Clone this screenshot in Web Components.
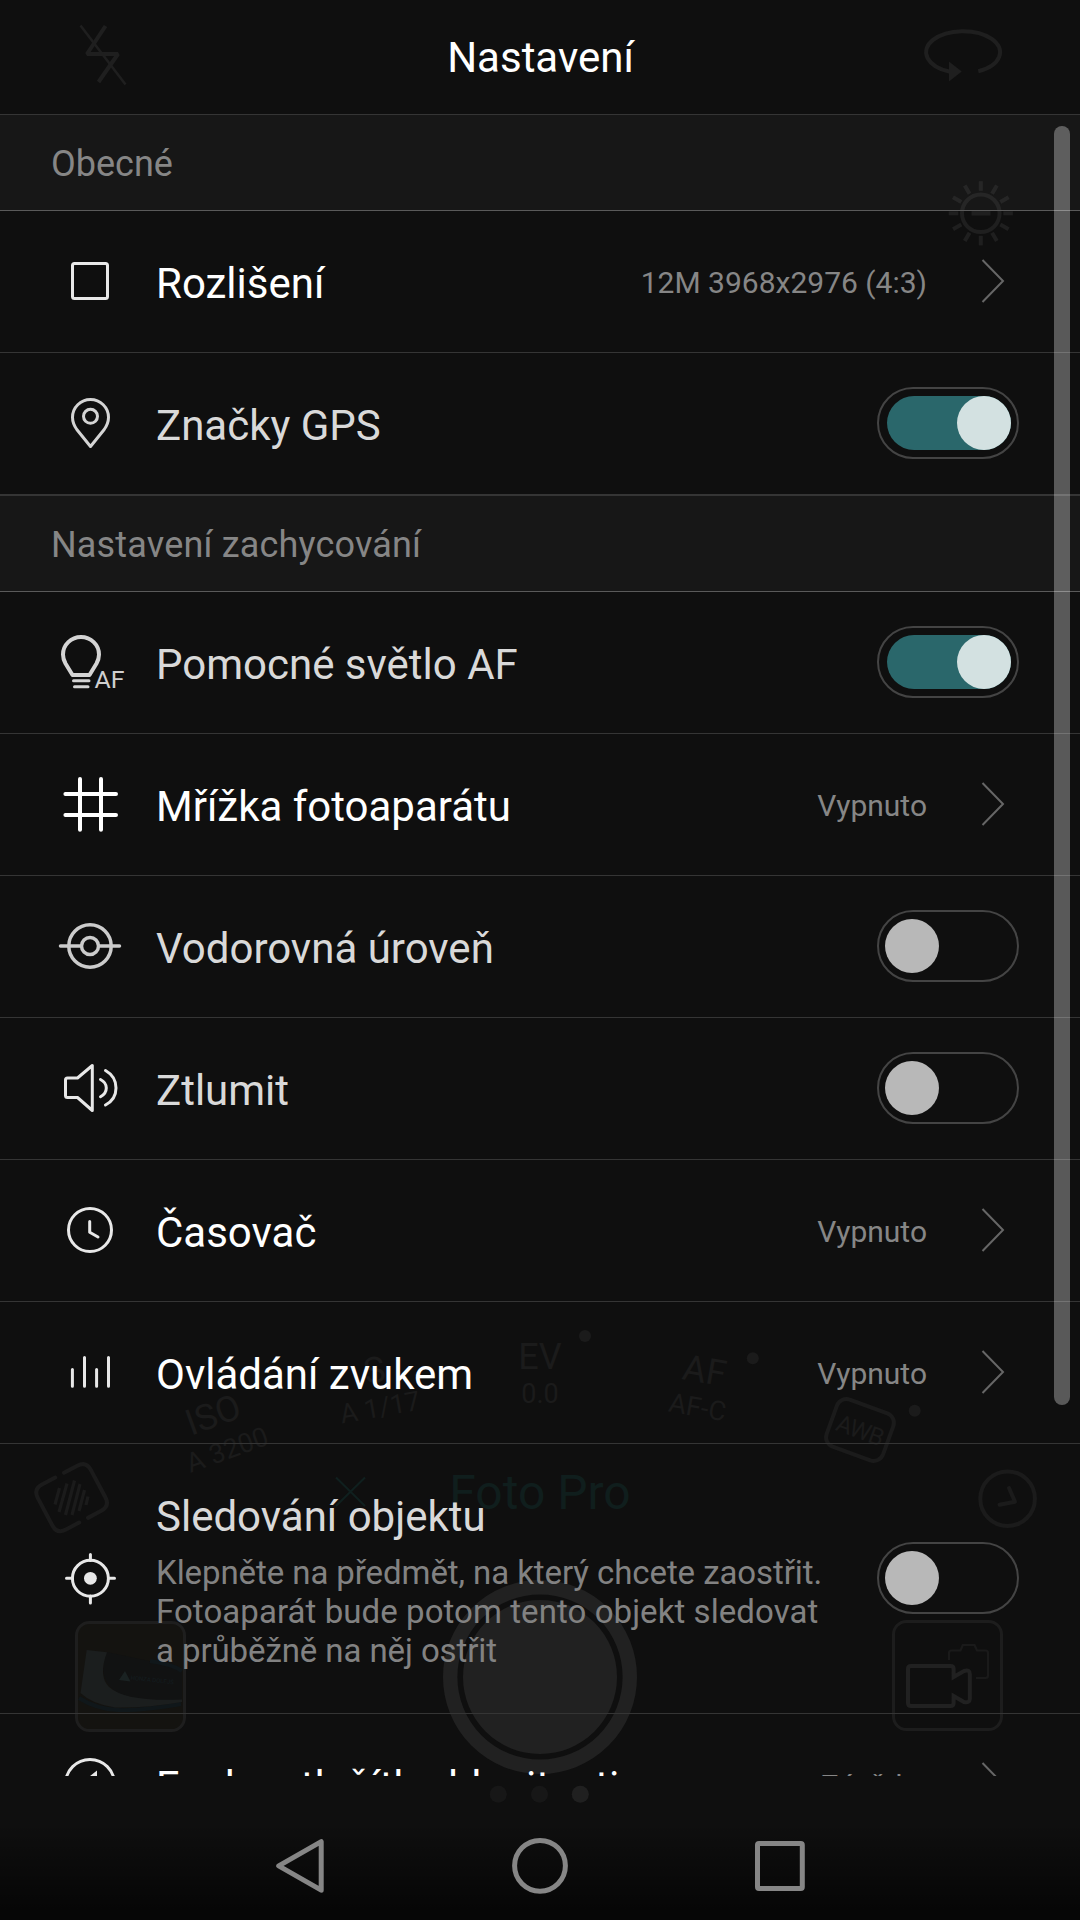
<!DOCTYPE html>
<html lang="cs">
<head>
<meta charset="utf-8">
<title>Nastavení</title>
<style>
html,body{margin:0;padding:0;background:#0f0f0f}
body{width:1080px;height:1920px;overflow:hidden;font-family:Roboto,"Noto Sans",sans-serif}
</style>
</head>
<body>
<settings-screen>
  <camera-backdrop slot="backdrop"></camera-backdrop>
  <section-title>Obecné</section-title>
  <setting-row icon="square" value="12M 3968x2976 (4:3)">Rozlišení</setting-row>
  <setting-row icon="pin" toggle="on">Značky GPS</setting-row>
  <section-title style="letter-spacing:.17px">Nastavení zachycování</section-title>
  <setting-row icon="bulb" toggle="on">Pomocné světlo AF</setting-row>
  <setting-row icon="grid" value="Vypnuto">Mřížka fotoaparátu</setting-row>
  <setting-row icon="level" toggle="off">Vodorovná úroveň</setting-row>
  <setting-row icon="sound" toggle="off">Ztlumit</setting-row>
  <setting-row icon="clock" value="Vypnuto">Časovač</setting-row>
  <setting-row icon="bars" value="Vypnuto">Ovládání zvukem</setting-row>
  <setting-row icon="target" toggle="off" tall>Sledování objektu<span slot="note"><span style="letter-spacing:-.08px">Klepněte na předmět, na který chcete zaostřit.</span><br><span style="letter-spacing:.07px">Fotoaparát bude potom tento objekt sledovat</span><br><span style="letter-spacing:-.09px">a průběžně na něj ostřit</span></span></setting-row>
  <setting-row icon="volume" value="Závěrka">Funkce tlačítka hlasitosti</setting-row>
  <nav-bar slot="nav"></nav-bar>
</settings-screen>
<script>
const define = (name, render) => customElements.define(name, class extends HTMLElement {
  connectedCallback() {
    if (this.shadowRoot) return;
    this.attachShadow({ mode: 'open' }).innerHTML = render(this);
  }
});

/* Icon coordinates: x is the screen column, y is measured from the top of the row. */
const ICONS = {
  square: '<g stroke="#e8e8e8"><rect x="72.5" y="52.5" width="35" height="35" rx="2"/></g>',
  pin: '<g stroke="#d4d4d4"><path d="M90.5 93.5L76.8 76.5Q72.5 70.5 72.5 64.3a18 17.8 0 0 1 36 0Q108.500 70.500 104.2 76.500z"/><circle cx="90.500" cy="63.300" r="7"/></g>',
  bulb: '<g stroke="#d4d4d4"><path stroke-width="4" d="M72.500 83L65.500 71.500Q63 67 63 62.500a18 17.500 0 0 1 36 0Q99 67 96.500 71.500L89.500 83z"/><path d="M73.500 88.700h15.500M74.500 94.700h13.500"/></g><text x="94.500" y="96" font-size="24" textLength="30" lengthAdjust="spacingAndGlyphs" fill="#cfcfcf">AF</text>',
  grid: '<g stroke="#fff" stroke-width="4"><path d="M80 45v50.700M101 45v50.700M65.400 60h50.600M65.400 81h50.600"/></g>',
  level: '<g stroke="#ccc" stroke-width="3.500"><circle cx="90" cy="70" r="21.200"/><circle cx="90" cy="70" r="8.500"/><path d="M60.500 70h19.500M100 70h19.500"/></g>',
  sound: '<g stroke="#e8e8e8"><path d="M67.500 60H77.500L92.300 47.500V92.500L77.500 79.500H67.500Q65.500 79.500 65.500 77.500V62Q65.500 60 67.500 60z"/><path d="M100.500 61.500Q106.300 64.500 106.300 70T100.500 78.800M105.500 52.500C119.500 60.500 119.500 79.500 105.500 87"/></g>',
  clock: '<g stroke="#e8e8e8"><circle cx="90" cy="70" r="21.500"/><path d="M89.700 61.500V72.300L98 77"/></g>',
  bars: '<g stroke="#e8e8e8"><path d="M72.400 67.500v16.800M84.500 55.500v28.800M96.600 67.500v16.800M108.500 55.500v28.800"/></g>',
  target: '<g stroke="#e8e8e8"><circle cx="90.400" cy="134.300" r="18"/><path d="M90.400 110.500v6M90.400 152v7M66.500 134.300h6M108.500 134.300h6"/><circle cx="90.400" cy="134.300" r="6.400" fill="#e8e8e8" stroke="none"/></g>',
  volume: '<g stroke="#e8e8e8"><circle cx="90" cy="70" r="24.500"/><path fill="#e8e8e8" stroke="none" d="M97 56.500V84L88.500 76H81V64H87.500z"/></g>'
};

define('camera-backdrop', () => {
  let rays = '';
  for (let i = 0; i < 12; i++) rays += `<path d="M980.800 190.800V181.200" transform="rotate(${i * 30} 980.800 213.300)"/>`;
  return `
<style>:host{display:block;width:1080px;height:1920px}svg{display:block}text{font-family:Roboto,sans-serif;text-anchor:middle}</style>
<svg width="1080" height="1920" viewBox="0 0 1080 1920" fill="none" stroke-width="4">
  <g stroke="#1f1f1f">
    <path d="M105.500 26L87 54H118L98.500 82" stroke-linejoin="bevel"/><path stroke-width="2.500" d="M80.500 25.500L125.500 84.500"/>
    <path d="M978.300 71.300A37 21 0 1 0 950 71.800"/><path d="M949 61.500V81.500L961.700 71.500z" fill="#1f1f1f" stroke="none"/>
    <circle cx="980.800" cy="213.300" r="18.800"/><path d="M971.500 213.300h19" stroke-width="4.500"/>${rays}
  </g>
  <g fill="#1b1b1b">
    <circle cx="585" cy="1336" r="6"/><circle cx="752.800" cy="1358.300" r="6"/><circle cx="914.700" cy="1410.700" r="6"/>
    <text x="540" y="1369" font-size="36">EV</text><text x="540" y="1402.700" font-size="27">0.0</text>
    <g transform="translate(704.600 1370.500) rotate(10)"><text y="12.500" font-size="36">AF</text></g>
    <g transform="translate(697.500 1407) rotate(10)"><text y="9.500" font-size="27">AF-C</text></g>
    <g transform="translate(374.300 1370) rotate(-10)"><text y="12.500" font-size="36">S</text></g>
    <g transform="translate(380 1407) rotate(-10)"><text y="9.500" font-size="27">A 1/17</text></g>
    <g transform="translate(213 1414.500) rotate(-20)"><text y="12.500" font-size="36">ISO</text></g>
    <g transform="translate(227 1449.500) rotate(-20)"><text y="9.500" font-size="27">A 3200</text></g>
    <g transform="translate(860 1430) rotate(20)"><text y="8.500" font-size="24" letter-spacing="-1">AWB</text><rect x="-30" y="-25" width="60" height="50" rx="10" fill="none" stroke="#1b1b1b"/></g>
  </g>
  <g stroke="#1b1b1b" stroke-linecap="round" stroke-linejoin="round">
    <circle cx="1007.600" cy="1498.700" r="27.300"/><path d="M1009 1488L1015 1501.700L999.500 1504.700"/>
    <g transform="translate(71.600 1497.700) rotate(-28)"><path d="M5 -25.500H20Q30 -25.500 30 -15.500V15.500Q30 25.500 20 25.500H5M-5 25.500H-20Q-30 25.500 -30 15.500V-15.500Q-30 -25.500 -20 -25.500H-5"/></g>
    <path stroke-width="3.200" stroke-linecap="butt" d="M55 1504.500L59.500 1488M59 1512L67 1483.500M65.500 1515L74.500 1480.500M72 1515L80 1484M79 1511L84.500 1490M86 1505L88 1496.500"/>
  </g>
  <path d="M336 1477.500L365 1506M365 1477.500L336 1506" stroke="#10201f" stroke-width="2"/>
  <text x="540" y="1509" font-size="48" fill="#101e1d">Foto Pro</text>
  <circle cx="540" cy="1677" r="89.800" stroke="#212121" stroke-width="14.400"/><circle cx="540" cy="1677" r="77" fill="#212121"/>
  <rect x="76.500" y="1622.500" width="108" height="108" rx="13" fill="#141310" stroke="#1e1e1e" stroke-width="3"/>
  <path fill="#111212" d="M107 1652L182 1668V1700Q140 1702 118 1693Q96 1680 107 1652z"/>
  <path stroke="#10171a" stroke-width="4" d="M79 1698Q96 1709 118 1710T181 1704M150 1661Q172 1664 182 1671"/>
  <path fill="#1b1e1e" d="M86.700 1650L107 1652.300Q98 1676 109 1687Q126 1702 182 1699.500V1702Q148 1708 115 1707.500Q92 1704 80.500 1693z"/>
  <path fill="#1a2222" d="M125 1671L130.500 1681.500L119 1680z"/>
  <g transform="translate(152 1682) rotate(6)"><text font-size="6" fill="#141d20">HONZA DOLEJŠ</text></g>
  <rect x="893.500" y="1621.500" width="108" height="108" rx="13" stroke="#1d1d1d" stroke-width="3"/>
  <path stroke="#212121" d="M953.600 1677V1669Q953.600 1666 950.600 1666H911Q908 1666 908 1669V1703Q908 1706 911 1706H950.600Q953.600 1706 953.600 1703V1696L964 1702Q969.800 1703 969.800 1699V1674Q969.800 1669 964 1671z"/>
  <path stroke="#1a1a1a" stroke-width="2.200" d="M949 1660V1653Q949 1650.500 951.500 1650.500H960.500L962.800 1645H974.500L977 1650.500H985.500Q988 1650.500 988 1653V1675.500Q988 1678 985.500 1678H976"/>
  <circle cx="498.300" cy="1794.300" r="8.500" fill="#171717"/><circle cx="539.500" cy="1794.300" r="8.500" fill="#171717"/><circle cx="580.300" cy="1794.300" r="8.500" fill="#202020"/>
</svg>`;
});

define('section-title', () => `
<style>
:host{display:flex;align-items:center;box-sizing:border-box;height:97px;flex:none;padding:2px 0 0 51px;border-top:1px solid #353535;border-bottom:1px solid #5a5a5a;background:rgba(255,255,255,.035);color:#868686;font-size:36px;line-height:42px}
</style><slot></slot>`);

define('toggle-switch', el => {
  const on = el.getAttribute('state') === 'on';
  return `
<style>
:host{display:flex;box-sizing:border-box;width:142px;height:72px;border:2px solid #444;border-radius:36px;padding:7px 6px}
.track{display:flex;flex:1;justify-content:${on ? 'flex-end' : 'flex-start'};border-radius:27px;${on ? 'background:#2a676b;margin-left:2px' : ''}}
.knob{width:54px;height:54px;border-radius:50%;background:${on ? '#d3e1e1' : '#b8b8b8'}}
</style><div class="track"><div class="knob"></div></div>`;
});

define('setting-row', el => {
  const t = el.getAttribute('toggle'), tall = el.hasAttribute('tall'), h = tall ? 269 : 141;
  return `
<style>
:host{display:flex;align-items:center;box-sizing:border-box;height:${h + 1}px;flex:none;padding:0 61px 0 54px;border-bottom:1px solid #353535}
svg{display:block;flex:none}
.icon text{font-family:Roboto,sans-serif}
.text{display:flex;flex-direction:column;flex:1;margin-left:30px;padding-top:4px;white-space:nowrap}
.label{font-size:42px;line-height:49px;color:${t ? '#d9d9d9' : '#fff'}}
.note{font-size:33px;line-height:39px;color:#828282;margin-top:12px}
.value{font-size:30px;line-height:35px;color:#868686;padding-top:1px;margin-right:54px}
.arrow{margin-right:14px}
toggle-switch{margin-bottom:1px}
</style>
<svg class="icon" width="72" height="${h}" viewBox="54 0 72 ${h}" fill="none" stroke-width="3" stroke-linecap="round" stroke-linejoin="round">${ICONS[el.getAttribute('icon')]}</svg>
<div class="text"><div class="label"><slot></slot></div>${tall ? '<div class="note"><slot name="note"></slot></div>' : ''}</div>
${t ? `<toggle-switch state="${t}"></toggle-switch>` : `<div class="value">${el.getAttribute('value')}</div>
<svg class="arrow" width="24" height="45" viewBox="0 0 24 45" fill="none" stroke="#666" stroke-width="2"><path d="M1.500 1L22 22L1.500 43"/></svg>`}`;
});

define('nav-bar', () => `
<style>
:host{display:flex;align-items:center;justify-content:center;gap:180px;height:108px;background:linear-gradient(rgba(0,0,0,0) 10%,rgba(0,0,0,.6) 90%)}
svg{display:block}
</style>
<svg width="60" height="60" fill="none" stroke="#868686" stroke-width="5" stroke-linejoin="round"><path d="M51.200 5.700V54.200L8.700 29.800z"/></svg>
<svg width="60" height="60" fill="none" stroke="#868686" stroke-width="5"><circle cx="30" cy="29.800" r="25.400"/></svg>
<svg width="60" height="60" fill="none" stroke="#868686" stroke-width="5"><rect x="7.500" y="7.500" width="44.800" height="45" rx="1.500"/></svg>`);

define('settings-screen', () => `
<style>
:host{display:flex;flex-direction:column;position:relative;width:1080px;height:1920px;overflow:hidden;background:#0f0f0f}
.backdrop{position:absolute;inset:0}
header,.list,.foot{position:relative}
header{height:114px;flex:none;display:flex;align-items:center;justify-content:center;box-sizing:border-box;padding-left:1px;color:#fff;font-size:42px;line-height:49px}
.list{height:1662px;flex:none;display:flex;flex-direction:column;overflow:hidden}
.bar{position:absolute;right:10px;top:12px;width:16px;height:1279px;border-radius:8px;background:rgba(255,255,255,.31)}
.foot{flex:1;display:flex;flex-direction:column;justify-content:flex-end}
</style>
<div class="backdrop"><slot name="backdrop"></slot></div>
<header>Nastavení</header>
<div class="list"><slot></slot><div class="bar"></div></div>
<div class="foot"><slot name="nav"></slot></div>`);
</script>
</body>
</html>
